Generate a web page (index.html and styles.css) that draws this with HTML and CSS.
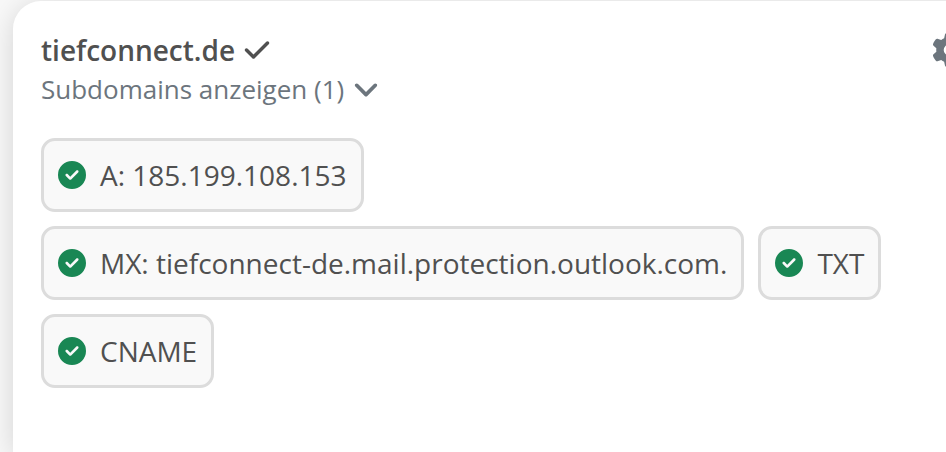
FILE: index.html
```html
<!DOCTYPE html>
<html lang="de">
<head>
<meta charset="utf-8">
<meta name="viewport" content="width=device-width, initial-scale=1">
<title>tiefconnect.de</title>
<link rel="stylesheet" href="styles.css">
</head>
<body>
<svg class="sprite" aria-hidden="true">
  <symbol id="circle-check" viewBox="0 0 512 512"><path d="M256 512A256 256 0 1 0 256 0a256 256 0 1 0 0 512zM369 209L241 337c-9.4 9.4-24.6 9.4-33.9 0l-64-64c-9.4-9.4-9.4-24.6 0-33.9s24.6-9.4 33.9 0l47 47L335 175c9.4-9.4 24.6-9.4 33.9 0s9.4 24.6 0 33.9z"/></symbol>
</svg>
<main class="card">
  <header class="card-header">
    <div class="card-titles">
      <h1 class="domain">tiefconnect.de
        <svg class="icon-check" viewBox="0 0 448 512" aria-hidden="true"><path d="M438.6 105.4c12.5 12.5 12.5 32.8 0 45.3l-256 256c-12.5 12.5-32.8 12.5-45.3 0l-128-128c-12.5-12.5-12.5-32.8 0-45.3s32.8-12.5 45.3 0L160 338.7 393.4 105.4c12.5-12.5 32.8-12.5 45.3 0z"/></svg>
      </h1>
      <button type="button" class="subdomains">Subdomains anzeigen (1)
        <svg class="icon-chevron" viewBox="0 0 448 512" aria-hidden="true"><path d="M201.4 374.6c12.5 12.5 32.8 12.5 45.3 0l160-160c12.5-12.5 12.5-32.8 0-45.3s-32.8-12.5-45.3 0L224 306.7 86.600 169.400c-12.500-12.500-32.800-12.500-45.300 0s-12.500 32.800 0 45.300l160 160z"/></svg>
      </button>
    </div>
    <button type="button" class="settings" aria-label="Einstellungen">
      <svg class="icon-gear" viewBox="0 0 512 512" aria-hidden="true"><path d="M495.900 166.600c3.200 8.700 .5 18.400-6.400 24.600l-43.300 39.400c1.100 8.300 1.700 16.800 1.700 25.400s-.6 17.100-1.700 25.400l43.300 39.400c6.900 6.200 9.600 15.900 6.400 24.600c-4.400 11.900-9.700 23.300-15.800 34.300l-4.700 8.100c-6.600 11-14 21.400-22.100 31.200c-5.900 7.200-15.700 9.600-24.500 6.800l-55.700-17.700c-13.400 10.300-28.200 18.900-44 25.400l-12.500 57.100c-2 9.100-9 16.300-18.200 17.800c-13.800 2.300-28 3.500-42.500 3.500s-28.700-1.200-42.500-3.500c-9.200-1.500-16.200-8.700-18.200-17.800l-12.500-57.100c-15.800-6.500-30.600-15.100-44-25.400L83.100 425.900c-8.800 2.800-18.600 .3-24.500-6.800c-8.100-9.800-15.500-20.200-22.100-31.200l-4.700-8.100c-6.100-11-11.400-22.400-15.800-34.300c-3.200-8.700-.5-18.400 6.400-24.600l43.300-39.400C64.600 273.100 64 264.600 64 256s.6-17.100 1.700-25.400L22.400 191.200c-6.900-6.200-9.600-15.900-6.400-24.600c4.400-11.900 9.700-23.300 15.800-34.300l4.700-8.100c6.600-11 14-21.400 22.100-31.200c5.900-7.200 15.700-9.600 24.500-6.800l55.700 17.700c13.400-10.300 28.200-18.900 44-25.400l12.500-57.100c2-9.100 9-16.300 18.200-17.800C227.300 1.200 241.500 0 256 0s28.700 1.200 42.500 3.500c9.200 1.500 16.200 8.700 18.200 17.800l12.500 57.100c15.800 6.500 30.600 15.100 44 25.400l55.700-17.700c8.800-2.800 18.600-.3 24.500 6.800c8.100 9.800 15.500 20.200 22.100 31.200l4.700 8.100c6.100 11 11.400 22.400 15.800 34.300zM256 336a80 80 0 1 0 0-160 80 80 0 1 0 0 160z"/></svg>
    </button>
  </header>
  <ul class="records">
    <li class="record"><svg class="icon-status" aria-hidden="true"><use href="#circle-check"/></svg>A: 185.199.108.153</li>
    <li class="record"><svg class="icon-status" aria-hidden="true"><use href="#circle-check"/></svg>MX: tiefconnect-de.mail.protection.outlook.com.</li>
    <li class="record"><svg class="icon-status" aria-hidden="true"><use href="#circle-check"/></svg>TXT</li>
    <li class="record"><svg class="icon-status" aria-hidden="true"><use href="#circle-check"/></svg>CNAME</li>
  </ul>
</main>
</body>
</html>
```
FILE: styles.css
```css
* {
  box-sizing: border-box;
}

body {
  margin: 0;
  min-height: 100vh;
  display: flex;
  overflow: hidden;
  background: #f8f8f8;
  color: #505050;
  font-family: "Open Sans", "Noto Sans", sans-serif;
  font-size: 28px;
  line-height: 42px;
}

svg {
  fill: currentColor;
  flex: none;
}

.sprite {
  display: none;
}

/* The card runs on past the right edge of the window. */
.card {
  flex: 1;
  margin: 1px -48px 0 13px;
  padding: 28px;
  border-radius: 28px 28px 0 0;
  background: #fff;
  box-shadow: 0 4px 28px rgba(0, 0, 0, 0.15);
}

.card-header {
  display: flex;
  justify-content: space-between;
  align-items: flex-start;
}

.domain {
  display: flex;
  align-items: center;
  gap: 9px;
  margin: 0;
  font-size: 28px;
  font-weight: 600;
  line-height: 42px;
}

.subdomains,
.settings {
  display: flex;
  align-items: center;
  padding: 0;
  border: 0;
  background: none;
  color: #6c757d;
  font: inherit;
  cursor: pointer;
}

.subdomains {
  gap: 9px;
  font-size: 26px;
  line-height: 36px;
}

.settings {
  height: 42px;
}

.icon-check {
  width: 26px;
  height: 28px;
}

.icon-chevron {
  width: 26px;
  height: 30px;
}

.icon-gear {
  width: 34px;
  height: 34px;
}

.records {
  display: flex;
  flex-wrap: wrap;
  gap: 14px;
  margin: 31px 0 0;
  padding: 0;
  list-style: none;
}

.record {
  display: flex;
  align-items: center;
  gap: 14px;
  padding: 13px 14px;
  border: 3px solid #dcdcdc;
  border-radius: 14px;
  background: #f9f9f9;
}

.icon-status {
  width: 28px;
  height: 28px;
  color: #198754;
}
```
